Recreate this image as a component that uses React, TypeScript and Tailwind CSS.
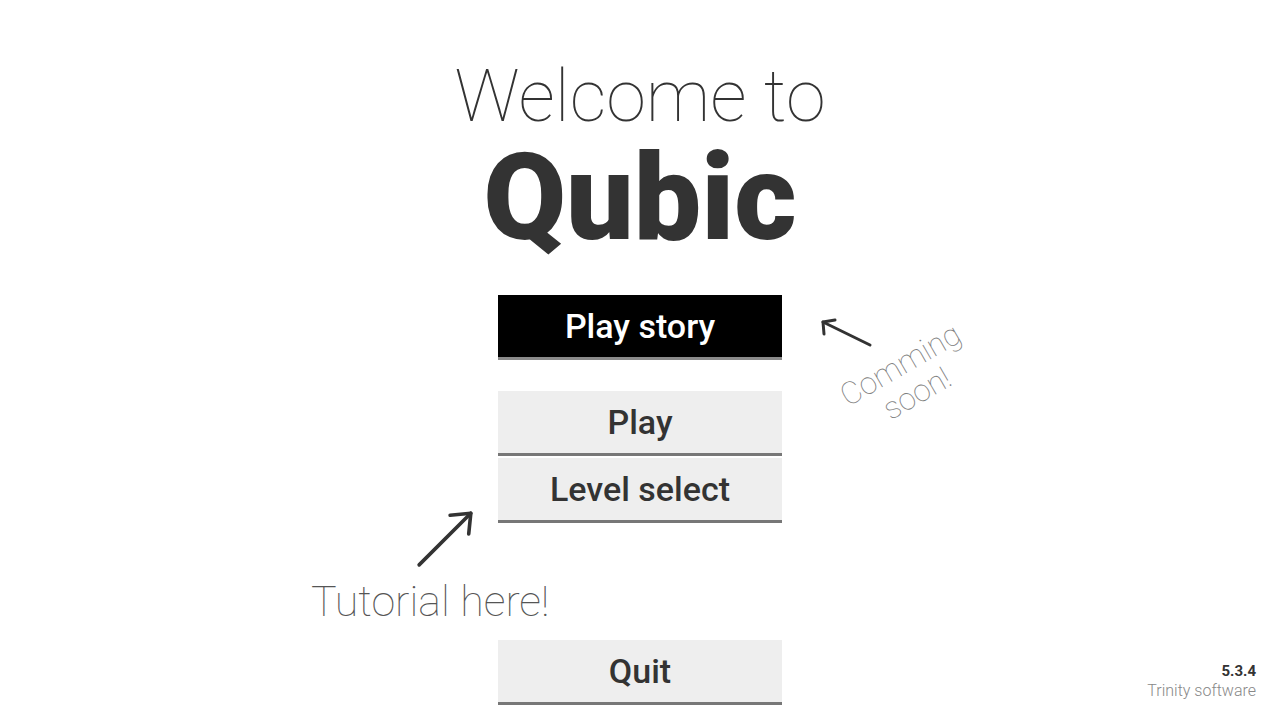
import React from 'react';

const font = { fontFamily: 'Roboto, "Liberation Sans", sans-serif' };

const MenuButton = ({ label, dark = false }: { label: string; dark?: boolean }) => (
  <button
    className={`w-[284px] h-[65px] border-b-[3px] text-[34px] font-medium leading-none ${
      dark ? 'bg-black text-white border-[#8a8a8a]' : 'bg-[#eeeeee] text-[#333333] border-[#777777]'
    }`}
  >
    {label}
  </button>
);

const Arrow = ({ className }: { className: string }) => (
  <svg className={className} viewBox="0 0 60 60" fill="none" stroke="#333333" strokeWidth="3.5" strokeLinecap="round" strokeLinejoin="round">
    <path d="M4 56 L54 6" />
    <path d="M34 8 L54 6 L52 26" />
  </svg>
);

export default function App() {
  return (
    <div className="relative w-full h-[720px] bg-white overflow-hidden text-[#333333]" style={font}>
      <div className="flex flex-col items-center">
        <h1 className="mt-[61px] text-[72px] font-thin leading-none">Welcome to</h1>
        <h2 className="mt-[5px] text-[120px] font-black leading-none">Qubic</h2>

        <div className="mt-[37px] flex flex-col">
          <MenuButton label="Play story" dark />
          <div className="h-[31px]" />
          <MenuButton label="Play" />
          <div className="h-[2px]" />
          <MenuButton label="Level select" />
          <div className="h-[117px]" />
          <MenuButton label="Quit" />
        </div>
      </div>

      {/* annotations */}
      <div className="absolute left-[818px] top-[318px] w-[56px] h-[30px]">
        <svg viewBox="0 0 56 30" className="w-full h-full" fill="none" stroke="#333333" strokeWidth="3" strokeLinecap="round" strokeLinejoin="round">
          <path d="M52 27 L5 4" />
          <path d="M6 16 L5 4 L17 2" />
        </svg>
      </div>
      <div className="absolute left-[842px] top-[346px] -rotate-[30deg] origin-center text-[#808080] text-[31px] font-thin leading-[33px] text-center">
        Comming
        <br />
        soon!
      </div>

      <Arrow className="absolute left-[415px] top-[503px] w-[62px] h-[70px]" />
      <div className="absolute left-[311px] top-[580px] text-[43px] font-thin leading-none text-[#555555]">
        Tutorial here!
      </div>

      <div className="absolute right-[24px] bottom-[19px] text-right leading-tight">
        <div className="text-[15px] font-bold text-[#333333]">5.3.4</div>
        <div className="text-[16px] font-light text-[#888888]">Trinity software</div>
      </div>
    </div>
  );
}
